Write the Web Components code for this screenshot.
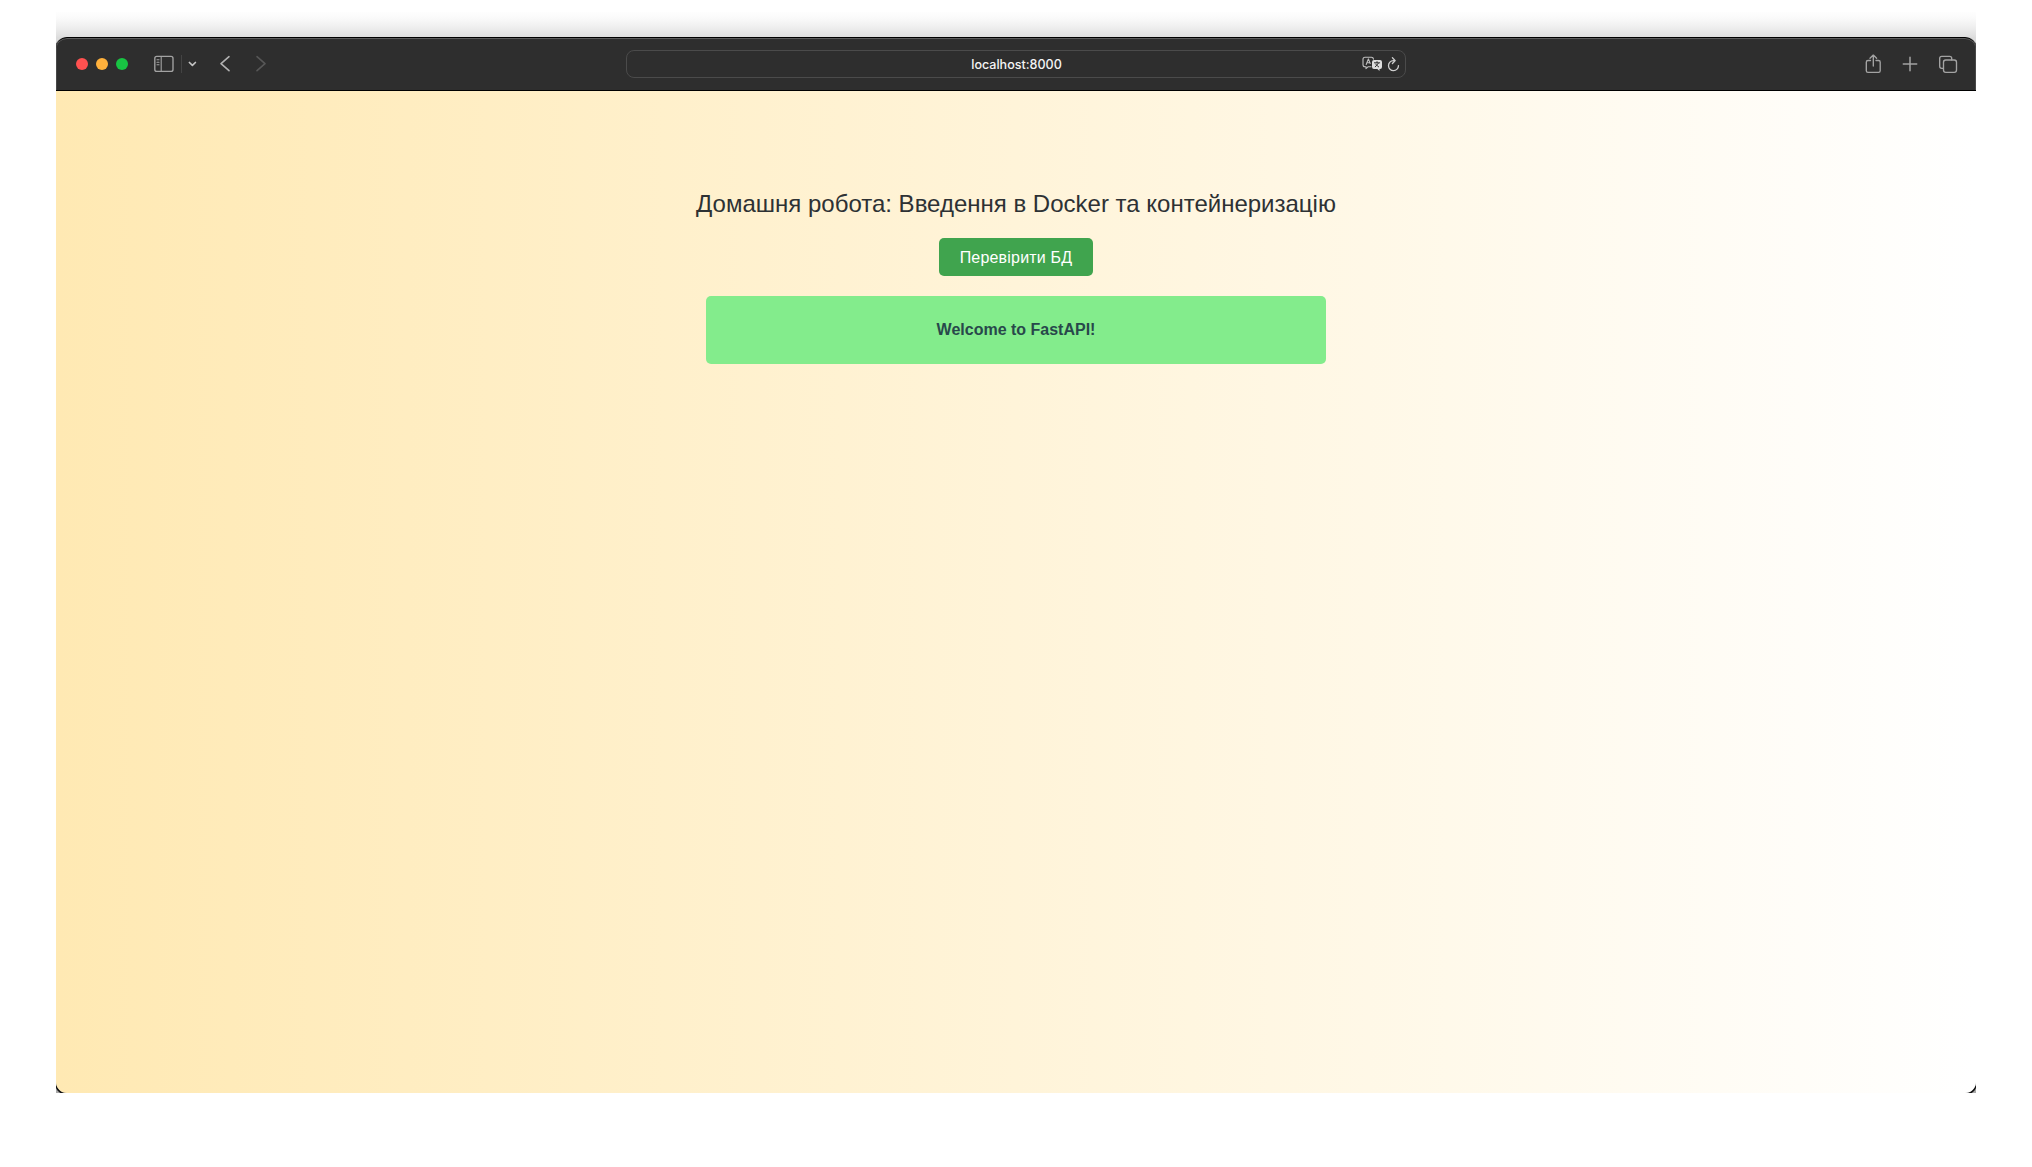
<!DOCTYPE html>
<html lang="uk">
<head>
<meta charset="utf-8">
<title>localhost:8000</title>
<style>
html, body { margin: 0; height: 100%; background: #fff; overflow: hidden; }
</style>
</head>
<body>
<desktop-frame>
  <browser-window>
    <browser-toolbar slot="toolbar">localhost:8000</browser-toolbar>
    <home-page>
      <page-title>Домашня робота: Введення в Docker та контейнеризацію</page-title>
      <action-button>Перевірити БД</action-button>
      <status-box>Welcome to FastAPI!</status-box>
    </home-page>
  </browser-window>
</desktop-frame>
<script>
const define = (name, html) => customElements.define(name, class extends HTMLElement {
  constructor() {
    super();
    this.attachShadow({ mode: 'open' }).innerHTML = html;
  }
});

define('desktop-frame', `
<style>
:host { display: flex; flex-direction: column; box-sizing: border-box; width: 1920px; height: 1081px;
  margin: 12px 56px 0; overflow: hidden; }
.shade { flex: 0 0 25px; background: linear-gradient(#fefefe, #fafafa 25%, #efefef 60%, #dedede); }
.body { flex: 1; display: flex;
  background: linear-gradient(#dcdcdc 0 30px, #fff 60px calc(100% - 30px), #a8a8a8 calc(100% - 20px)); }
</style>
<div class="shade"></div><div class="body"><slot></slot></div>`);

define('browser-window', `
<style>
:host { flex: 1; display: flex; flex-direction: column; overflow: hidden; border-radius: 11px; box-shadow: 0 1px 0 1px #111; }
</style>
<slot name="toolbar"></slot><slot></slot>`);

define('browser-toolbar', `
<style>
:host { flex: 0 0 54px; box-sizing: border-box; display: grid; grid-template-columns: 570px 780px 570px; align-items: center;
  background: #2e2e2e; border-top: 1px solid #000; border-bottom: 1px solid #000; border-radius: 11px 11px 0 0;
  box-shadow: inset 0 1px #5c5c5c, inset 1px 0 #484848, inset -1px 0 #484848;
  font: 500 12.55px/16px Inter, "Liberation Sans", sans-serif; color: #f4f4f4; }
svg { display: block; fill: none; stroke: #a3a3a3; stroke-width: 1.35; stroke-linecap: round; stroke-linejoin: round; }
.left { display: flex; align-items: center; padding-left: 20px; }
.dot { width: 12px; height: 12px; border-radius: 50%; margin-right: 8px; }
.url { display: grid; grid-template-columns: 1fr auto 1fr; align-items: center; box-sizing: border-box; height: 28px;
  border: 1px solid #4b4b4b; border-radius: 8px; }
.text { padding: 1px 0 0 1px; }
.tools { display: flex; justify-content: flex-end; align-items: center; gap: 4px; padding-right: 5px; }
.right { display: flex; justify-content: flex-end; align-items: center; gap: 20px; padding: 0 18px 1px 0; }
</style>
<div class="left">
  <span class="dot" style="background:#ff5150"></span><span class="dot" style="background:#ffb13c"></span><span class="dot" style="background:#18c443"></span>
  <svg width="20" height="18" viewBox="0 0 20 18" style="margin-left:18px"><rect x=".8" y="1.4" width="18.2" height="15" rx="2"/><path d="M7.2 1.5v15M3 4.8h2M3 7.3h2M3 9.8h2" stroke-width="1.1"/></svg>
  <svg width="1" height="18" viewBox="0 0 1 18" style="margin-left:7px"><path d="M.5 0v18" stroke="#444" stroke-width="1"/></svg>
  <svg width="10" height="8" viewBox="0 0 10 8" style="margin-left:5px"><path d="M2.4 2.5 5.4 5.4 8.4 2.5" stroke="#c4c4c4" stroke-width="1.7"/></svg>
  <svg width="12" height="18" viewBox="0 0 12 18" style="margin-left:22px"><path d="M10 1.7 2 8.7l8 7" stroke="#b2b2b2" stroke-width="1.6"/></svg>
  <svg width="12" height="18" viewBox="0 0 12 18" style="margin-left:24px"><path d="m2 1.7 8 7-8 7" stroke="#575757" stroke-width="1.6"/></svg>
</div>
<div class="url">
  <span></span><span class="text"><slot></slot></span>
  <div class="tools">
    <svg width="21" height="16" viewBox="0 0 21 16"><path d="M9 10.7H6.2L4 12.6v-1.9H3Q1 10.7 1 8.7V3.2Q1 1.2 3 1.2h6.5q1.7 0 2 2" stroke="#c0c0c0" stroke-width="1.1"/><path d="m4.2 8.5 2.2-5.6 1.8 4.6M5 6.8h2.7" stroke="#c0c0c0" stroke-width="1.1"/><path d="M12 4h6q2 0 2 2v5q0 2-2 2h-.5v2l-2.2-2H12q-2 0-2-2V6q0-2 2-2Z" fill="#dedede" stroke="none"/><path d="M12.4 6.8h5.3M15 5.6v1.2M13.3 10.8l3-3.5M13.7 8.3l3 2.6" stroke="#303030" stroke-width="1"/></svg>
    <svg width="13" height="16" viewBox="0 0 13 16"><path d="M6.4 4.6A5 5 0 1 0 11.5 9.6M6.4 4.6h1M5.4 1.8 8.2 4.6 5.4 7.5" stroke="#cfcfcf" stroke-width="1.3"/></svg>
  </div>
</div>
<div class="right">
  <svg width="17" height="20" viewBox="0 0 17 20"><path d="M5.5 6.5H3Q1.3 6.5 1.3 8.2v8.5q0 1.7 1.7 1.7h10.5q1.7 0 1.7-1.7V8.2q0-1.7-1.7-1.7H11M8.3 12V1.2M5 4.3l3.3-3.2 3.3 3.2"/></svg>
  <svg width="16" height="16" viewBox="0 0 16 16"><path d="M8 1.3v13.4M1.3 8h13.4" stroke-width="1.5"/></svg>
  <svg width="20" height="20" viewBox="0 0 20 20"><path d="M5.2 14.3H3.7q-2 0-2-2v-8q0-2 2-2h8q2 0 2 2v1.5"/><rect x="5.5" y="6" width="13" height="12.3" rx="2.2"/></svg>
</div>`);

define('home-page', `
<style>
:host { flex: 1; display: flex; flex-direction: column; align-items: center; box-sizing: border-box; padding-top: 99px;
  font-family: "Liberation Sans", Arial, sans-serif;
  background: linear-gradient(90deg, #ffe9b3, #fff); }
</style>
<slot></slot>`);

define('page-title', `
<style>:host { display: block; font-size: 24px; line-height: 28px; color: #2d3134; white-space: nowrap; }</style><slot></slot>`);

define('action-button', `
<style>
:host { display: block; margin-top: 20px; }
button { display: block; box-sizing: border-box; width: 154px; height: 38px; padding: 1px 0 0; border: 0; border-radius: 5px;
  background: #40a44e; color: #fff; font: 16px/37px "Liberation Sans", Arial, sans-serif; letter-spacing: .2px; }
</style>
<button><slot></slot></button>`);

define('status-box', `
<style>
:host { display: block; box-sizing: border-box; width: 620px; height: 68px; margin-top: 20px; border-radius: 5px;
  background: #83ec8c; color: #28484b; font-size: 16px; font-weight: 700; line-height: 67px; text-align: center; }
</style><slot></slot>`);
</script>
</body>
</html>
